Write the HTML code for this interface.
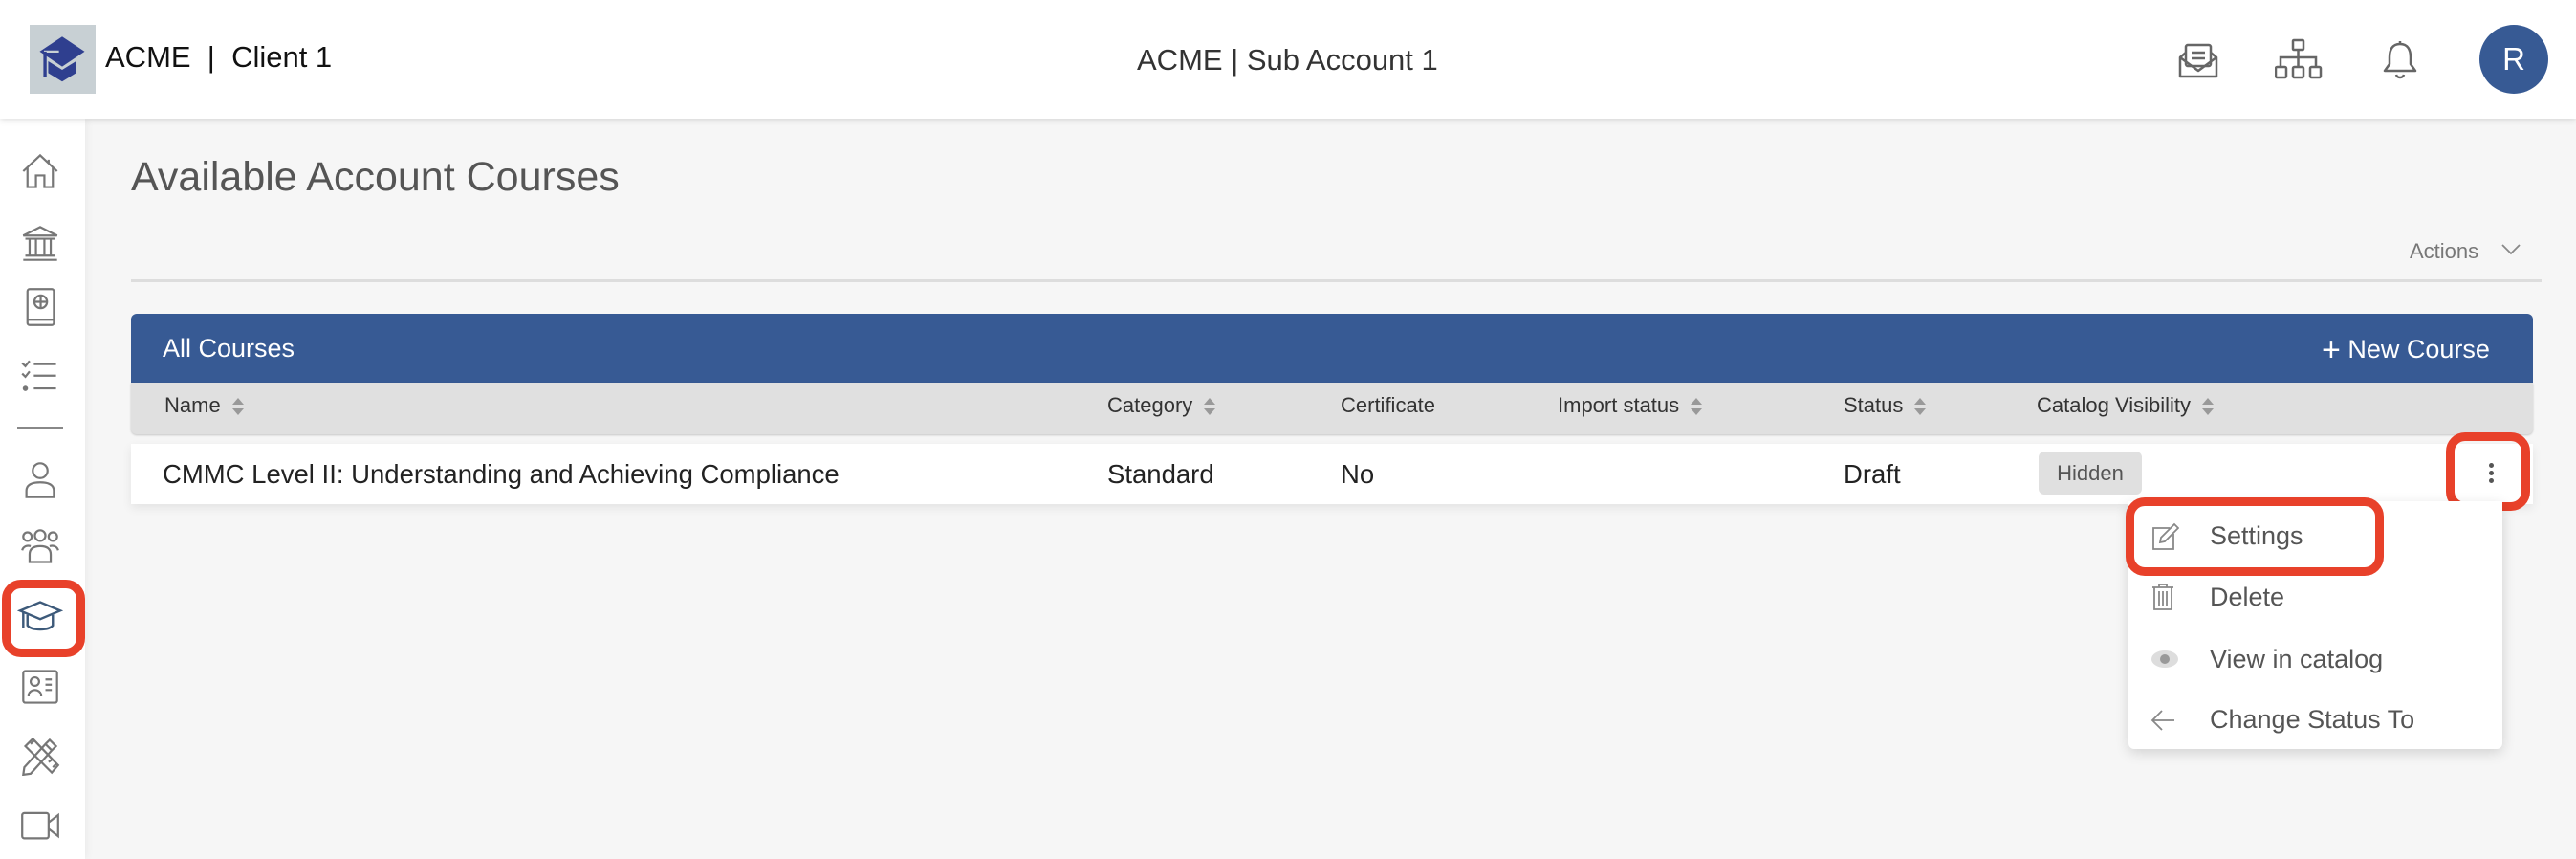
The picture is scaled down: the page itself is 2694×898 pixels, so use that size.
<!DOCTYPE html>
<html><head><meta charset="utf-8"><style>
*{box-sizing:border-box;margin:0;padding:0}
body{width:2694px;height:898px;overflow:hidden;background:#f6f6f6;font-family:"Liberation Sans",sans-serif;position:relative;color:#222}
.abs{position:absolute}
.hdr{left:0;top:0;width:2694px;height:124px;background:#fff;box-shadow:0 2px 6px rgba(0,0,0,.12);z-index:2}
.side{left:0;top:124px;width:89px;height:774px;background:#fff;box-shadow:2px 0 8px rgba(0,0,0,.05)}
.ic{position:absolute;left:21px;width:42px;height:42px}
.red{position:absolute;border:9px solid #e8412a;border-radius:20px}
.th{position:absolute;top:411px;font-size:22px;color:#333}
.td{position:absolute;top:480px;font-size:27.5px;color:#222}
.sort{display:inline-block;vertical-align:middle;margin-left:12px;width:12px;height:18px;position:relative}
.sort:before{content:"";position:absolute;left:0;top:0;border:6px solid transparent;border-bottom:7px solid #999;border-top:0}
.sort:after{content:"";position:absolute;left:0;bottom:0;border:6px solid transparent;border-top:7px solid #999;border-bottom:0}
.mi{position:absolute;left:2311px;font-size:27px;color:#555}
</style></head><body>
<div class="abs hdr">
  <div class="abs" style="left:31px;top:26px;width:69px;height:72px;background:#c8d0d4"></div>
  <svg class="abs" style="left:35px;top:36px" width="60" height="56" viewBox="0 0 46 50"><path d="M23 2 L44 16 L23 30 L2 16Z" fill="#2f3f8f"/><path d="M10 25 L10 36 L23 44 L36 36 L36 25 L23 33Z" fill="#2f3f8f"/><path d="M6 16 L20 16" stroke="#c8d0d4" stroke-width="2"/><path d="M7 16 L7 40" stroke="#2f3f8f" stroke-width="3"/></svg>
  <div class="abs" style="left:110px;top:42px;font-size:31px;color:#111">ACME &nbsp;|&nbsp; Client 1</div>
  <div class="abs" style="left:1189px;top:45px;font-size:31px;color:#333">ACME | Sub Account 1</div>
  <svg class="abs" style="left:2277px;top:40px" width="44" height="44" viewBox="0 0 44 44" fill="none" stroke="#666" stroke-width="2.5"><path d="M3 20 L3 40 L41 40 L41 20 L22 34 Z" stroke-linejoin="round"/><path d="M3 20 L9 15 M41 20 L35 15"/><rect x="9" y="7" width="26" height="22" rx="2"/><path d="M15 15 H29 M15 21 H29"/></svg>
  <svg class="abs" style="left:2379px;top:40px" width="50" height="44" viewBox="0 0 50 44" fill="none" stroke="#666" stroke-width="2.5"><rect x="19" y="2" width="11" height="10" rx="1"/><path d="M24.5 12 V30 M6 30 V20 H43 V30"/><rect x="1" y="30" width="11" height="11" rx="1.5"/><rect x="19" y="30" width="11" height="11" rx="1.5"/><rect x="37" y="30" width="11" height="11" rx="1.5"/></svg>
  <svg class="abs" style="left:2492px;top:40px" width="36" height="44" viewBox="0 0 36 44" fill="none" stroke="#666" stroke-width="2.5"><path d="M18 3 V6 M18 6 C10 6 7 12 7 20 L7 27 L2 34 H34 L29 27 L29 20 C29 12 26 6 18 6Z" stroke-linejoin="round"/><path d="M14 38 C15 42 21 42 22 38"/></svg>
  <div class="abs" style="left:2593px;top:26px;width:72px;height:72px;border-radius:50%;background:#375a94;color:#fff;font-size:33px;text-align:center;line-height:72px">R</div>
</div>
<div class="abs side">
  <svg class="ic" style="top:34px" viewBox="0 0 38 38" fill="none" stroke="#777" stroke-width="2"><path d="M3 19 L19 4 L35 19 M7 15 V34 H15 V23 H23 V34 H31 V15 M27 8 V12"/></svg>
  <svg class="ic" style="top:109px" viewBox="0 0 38 38" fill="none" stroke="#777" stroke-width="2"><path d="M3 12 L19 4 L35 12 Z M5 15 H33 M9 15 V31 M15 15 V31 M23 15 V31 M29 15 V31 M5 31 H33 M3 35 H35"/></svg>
  <svg class="ic" style="top:176px" viewBox="0 0 38 38" fill="none" stroke="#777" stroke-width="2"><rect x="7" y="2" width="25" height="34" rx="2"/><path d="M7 31 H32"/><circle cx="19.5" cy="14" r="6"/><path d="M13.5 14 H25.5 M19.5 8 V20"/></svg>
  <svg class="ic" style="top:250px" viewBox="0 0 38 38" fill="none" stroke="#777" stroke-width="2"><path d="M2 5 L5 8 L9 3 M2 15 L5 18 L9 13 M13 6 H34 M13 17 H34 M13 29 H34"/><circle cx="5" cy="29" r="1.5" fill="#777"/></svg>
  <div class="abs" style="left:18px;top:322px;width:48px;height:2px;background:#888"></div>
  <svg class="ic" style="top:357px" viewBox="0 0 38 38" fill="none" stroke="#777" stroke-width="2"><circle cx="19" cy="10" r="7"/><path d="M6 35 V29 C6 23 12 21 19 21 C26 21 32 23 32 29 V35 Z"/></svg>
  <svg class="ic" style="top:427px" viewBox="0 0 38 38" fill="none" stroke="#777" stroke-width="2"><circle cx="19" cy="8" r="5"/><circle cx="7" cy="9" r="4"/><circle cx="31" cy="9" r="4"/><path d="M9 33 V26 C9 20 13 18 19 18 C25 18 29 20 29 26 V33 Z M2 22 C3 18 7 17 10 18 M36 22 C35 18 31 17 28 18"/></svg>
  <svg class="ic" style="top:500px;left:18px;width:48px" viewBox="0 0 42 38" fill="none" stroke="#3d5a7a" stroke-width="2.2"><path d="M2 13 L21 5 L40 13 L21 21 Z"/><path d="M9 17 V27 C13 32 29 32 33 27 V17"/><path d="M5 14 V29"/></svg>
  <svg class="ic" style="top:573px" viewBox="0 0 38 38" fill="none" stroke="#777" stroke-width="2"><rect x="3" y="4" width="32" height="30" rx="2"/><circle cx="14" cy="14" r="4"/><path d="M8 28 C8 20 20 20 20 28 M24 12 H30 M24 17 H30 M24 22 H30"/></svg>
  <svg class="ic" style="top:645px" viewBox="0 0 38 38" fill="none" stroke="#777" stroke-width="2"><path d="M4 30 L24 8 L30 14 L10 36 L3 37 Z M24 8 L28 4 L34 10 L30 14"/><path d="M12 3 L36 28 L30 35 L5 10 Z M10 8 L13 5 M27 25 L31 22 M31 30 L34 27"/></svg>
  <svg class="ic" style="top:717px" viewBox="0 0 38 38" fill="none" stroke="#777" stroke-width="2"><rect x="2" y="8" width="25" height="24" rx="2"/><path d="M27 17 L36 10 V30 L27 23"/></svg>
  <div class="red" style="left:2px;top:482px;width:87px;height:81px"></div>
</div>
<div class="abs" style="left:137px;top:161px;font-size:43px;color:#555;font-weight:300">Available Account Courses</div>
<div class="abs" style="left:2520px;top:250px;font-size:22px;color:#777">Actions</div>
<svg class="abs" style="left:2615px;top:254px" width="22" height="14" viewBox="0 0 22 14" fill="none" stroke="#888" stroke-width="1.8"><path d="M2 2 L11 11 L20 2"/></svg>
<div class="abs" style="left:137px;top:292px;width:2521px;height:3px;background:#ddd"></div>
<div class="abs" style="left:137px;top:328px;width:2512px;height:72px;background:#375a94;border-radius:6px 6px 0 0"></div>
<div class="abs" style="left:170px;top:349px;font-size:27px;color:#fff">All Courses</div>
<div class="abs" style="left:2428px;top:347px;font-size:27px;color:#fff"><span style="font-size:34px;font-weight:300;vertical-align:-3px">+</span>&nbsp;New Course</div>
<div class="abs" style="left:137px;top:400px;width:2512px;height:54px;background:#e0e0e0;border-radius:0 0 6px 6px;box-shadow:0 1px 2px rgba(0,0,0,.2)"></div>
<div class="th" style="left:172px">Name<span class="sort"></span></div>
<div class="th" style="left:1158px">Category<span class="sort"></span></div>
<div class="th" style="left:1402px">Certificate</div>
<div class="th" style="left:1629px">Import status<span class="sort"></span></div>
<div class="th" style="left:1928px">Status<span class="sort"></span></div>
<div class="th" style="left:2130px">Catalog Visibility<span class="sort"></span></div>
<div class="abs" style="left:137px;top:464px;width:2512px;height:63px;background:#fff;box-shadow:0 4px 10px rgba(0,0,0,.08)"></div>
<div class="td" style="left:170px">CMMC Level II: Understanding and Achieving Compliance</div>
<div class="td" style="left:1158px">Standard</div>
<div class="td" style="left:1402px">No</div>
<div class="td" style="left:1928px">Draft</div>
<div class="abs" style="left:2132px;top:472px;width:108px;height:45px;background:#e0e0e0;border-radius:6px;font-size:22px;color:#555;text-align:center;line-height:45px">Hidden</div>
<div class="abs" style="left:2603px;top:484px;width:5px;height:5px;border-radius:50%;background:#555;box-shadow:0 8px 0 #555,0 16px 0 #555"></div>
<div class="red" style="left:2558px;top:452px;width:88px;height:82px"></div>
<div class="abs" style="left:2226px;top:524px;width:391px;height:259px;background:#fff;border-radius:0 0 6px 6px;box-shadow:0 4px 14px rgba(0,0,0,.15)"></div>
<svg class="abs" style="left:2249px;top:546px" width="30" height="30" viewBox="0 0 30 30" fill="none" stroke="#888" stroke-width="1.8"><path d="M20 6 H3 V28 H24 V12"/><path d="M10 21 L11 16 L25 2 L29 6 L15 20 Z"/></svg>
<svg class="abs" style="left:2250px;top:609px" width="24" height="30" viewBox="0 0 24 30" fill="none" stroke="#888" stroke-width="1.8"><path d="M1 5 H23 M8 5 V2 H16 V5 M3 5 V28 H21 V5 M8 9 V25 M12 9 V25 M16 9 V25"/></svg>
<svg class="abs" style="left:2249px;top:677px" width="30" height="24" viewBox="0 0 30 24"><ellipse cx="15" cy="12" rx="14" ry="9" fill="#ddd"/><circle cx="15" cy="12" r="5" fill="#999"/></svg>
<svg class="abs" style="left:2249px;top:741px" width="26" height="24" viewBox="0 0 26 24" fill="none" stroke="#888" stroke-width="1.8"><path d="M25 12 H2 M12 2 L2 12 L12 22"/></svg>
<div class="mi" style="top:545px">Settings</div>
<div class="mi" style="top:609px">Delete</div>
<div class="mi" style="top:674px">View in catalog</div>
<div class="mi" style="top:737px">Change Status To</div>
<div class="red" style="left:2223px;top:520px;width:270px;height:82px"></div>
</body></html>
